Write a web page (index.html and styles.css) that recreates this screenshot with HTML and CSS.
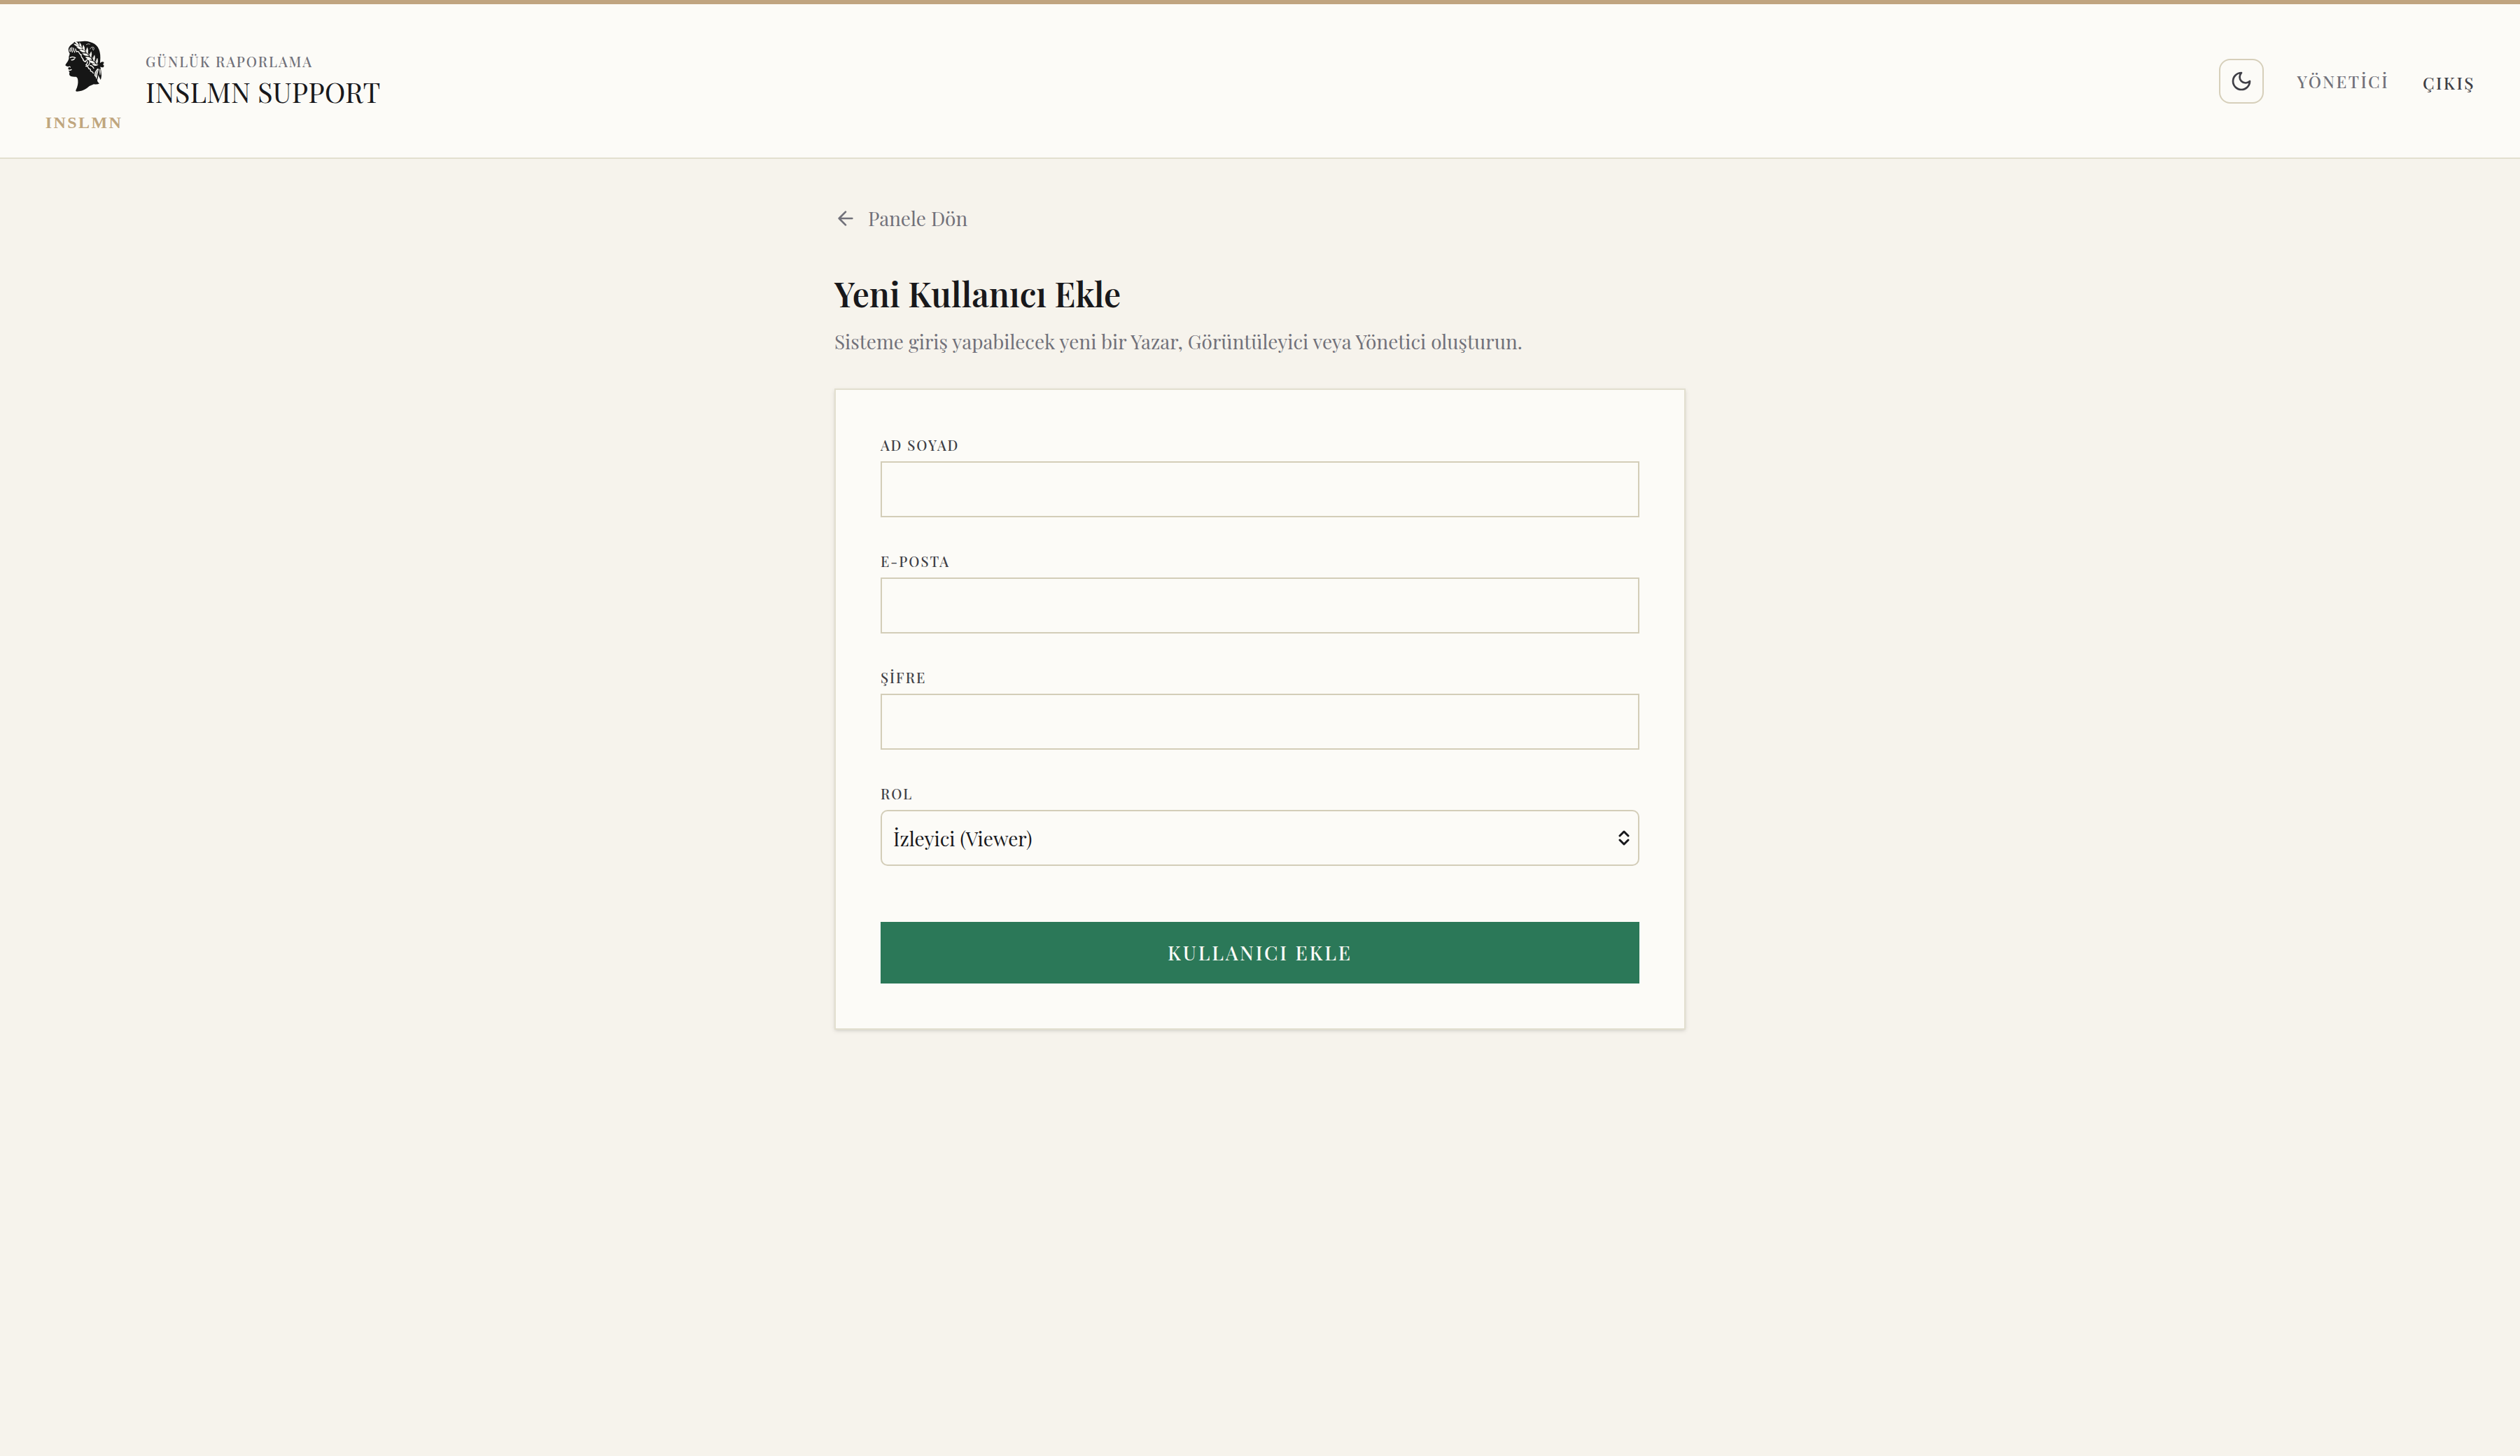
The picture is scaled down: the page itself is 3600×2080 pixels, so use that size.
FILE: index.html
```html
<!DOCTYPE html>
<html lang="tr">
<head>
  <meta charset="UTF-8" />
  <meta name="viewport" content="width=device-width, initial-scale=1" />
  <title>INSLMN Support</title>
  <link rel="stylesheet" href="styles.css">
</head>
<body>
  <header class="header">
    <div class="brand">
      <div class="logo">
        <svg class="logo-head" viewBox="-48 -6 336 336" aria-hidden="true">
          <!-- head and neck -->
          <path fill="#161616" d="M55 102 L53 90 Q56 76 70 68 L80 59 L106 58 Q128 54 146 60 Q168 66 179 82 Q191 102 190 128 L189 150 Q196 142 205 146 Q207 152 201 155 Q208 160 204 167 Q197 171 190 166 Q194 182 195 204 Q194 216 191 222 Q186 212 181 202 Q181 214 177 222 Q176 231 186 238 Q178 243 162 241 Q146 246 132 258 Q112 272 90 272 Q82 272 86 264 Q96 244 94 224 Q93 212 86 209 Q74 210 64 207 Q56 204 57 196 L58 189 L54 184 L59 180 L52 176 L54 166 Q46 165 41 161 Q39 158 43 154 Q53 142 55 132 Q54 122 59 110 Z"/>
          <!-- face, fringe and ear -->
          <g fill="none" stroke="#fcfbf7" stroke-width="4" stroke-linecap="round">
            <path d="M62 86 Q58 95 61 101 M68 84 Q66 95 70 103 M75 86 Q75 97 80 104 M84 90 Q84 99 89 102 Q94 97 98 104 Q102 113 109 115"/>
            <path d="M61 127 Q70 121 83 128 M66 137 Q74 138 79 132"/>
            <path d="M54 167 Q59 163 61 168 M58 181 Q63 180 66 178"/>
            <path d="M106 114 Q108 125 115 132 Q117 142 126 145 M126 145 Q130 133 141 136 Q148 143 143 153 Q137 166 130 158 M128 158 Q137 151 134 144 M128 164 Q138 162 140 174 Q150 175 148 184 Q158 187 160 194 M146 160 Q157 162 162 173"/>
            <path stroke-width="2" d="M130 71 Q138 65 145 69 M146 90 Q151 78 162 83 Q166 90 160 96 M154 83 Q160 86 158 92"/>
          </g>
          <!-- laurel leaves and ribbon -->
          <path fill="none" stroke="#fcfbf7" stroke-width="2" d="M80 59 Q132 94 180 158"/>
          <g fill="#fcfbf7" stroke="#fcfbf7" stroke-width="1">
            <path d="M80 56 Q94 60 98 73 Q85 70 80 56Z"/>
            <path d="M76 68 Q92 68 101 79 Q86 81 76 68Z"/>
            <path d="M101 62 Q110 70 109 83 Q99 77 101 62Z"/>
            <path d="M88 80 Q103 77 114 89 Q99 95 88 80Z"/>
            <path d="M117 73 Q126 85 121 97 Q111 87 117 73Z"/>
            <path d="M101 94 Q116 90 127 103 Q112 108 101 94Z"/>
            <path d="M134 83 Q141 98 134 111 Q125 98 134 83Z"/>
            <path d="M113 110 Q128 105 141 118 Q126 123 113 110Z"/>
            <path d="M151 101 Q156 115 148 127 Q141 113 151 101Z"/>
            <path d="M126 125 Q142 120 154 135 Q138 139 126 125Z"/>
            <path d="M165 116 Q170 131 162 143 Q155 129 165 116Z"/>
            <path d="M142 140 Q156 137 168 151 Q152 155 142 140Z"/>
            <path d="M177 129 Q182 144 175 153 Q168 143 177 129Z"/>
            <path d="M155 155 Q168 151 179 159 Q166 166 155 155Z"/>
            <path d="M178 174 Q164 188 165 204 Q172 209 174 218 Q176 195 183 176Z"/>
            <path d="M187 176 Q186 190 189 202 Q192 190 190 177Z"/>
          </g>
          <path fill="none" stroke="#161616" stroke-width="2" d="M178 181 Q169 192 171 205"/>
        </svg>
        <span class="logo-text">INSLMN</span>
      </div>
      <div>
        <div class="brand-sub">GÜNLÜK RAPORLAMA</div>
        <div class="brand-title">INSLMN SUPPORT</div>
      </div>
    </div>

    <nav class="nav">
      <button type="button" class="theme-btn" aria-label="Koyu tema">
        <svg class="icon" viewBox="0 0 24 24"><path d="M12 3a6 6 0 0 0 9 9 9 9 0 1 1-9-9Z"/></svg>
      </button>
      <span class="nav-role">YÖNETİCİ</span>
      <button type="button" class="logout">ÇIKIŞ</button>
    </nav>
  </header>

  <main class="main">
    <a class="back" href="#">
      <svg class="icon" viewBox="0 0 24 24"><path d="m12 19-7-7 7-7M19 12H5"/></svg>
      Panele Dön
    </a>
    <h1>Yeni Kullanıcı Ekle</h1>
    <p class="intro">Sisteme giriş yapabilecek yeni bir Yazar, Görüntüleyici veya Yönetici oluşturun.</p>

    <form class="card">
      <div class="field">
        <label for="name">AD SOYAD</label>
        <input type="text" id="name" name="name" required />
      </div>
      <div class="field">
        <label for="email">E-POSTA</label>
        <input type="email" id="email" name="email" required />
      </div>
      <div class="field">
        <label for="password">ŞİFRE</label>
        <input type="password" id="password" name="password" required />
      </div>
      <div class="field">
        <label for="role">ROL</label>
        <div class="select">
          <select id="role" name="role">
            <option value="viewer" selected>İzleyici (Viewer)</option>
            <option value="writer">Yazar</option>
            <option value="admin">Yönetici</option>
          </select>
          <svg class="select-arrows" viewBox="0 0 16 24" aria-hidden="true"><path d="M2 9l6-6 6 6M2 15l6 6 6-6"/></svg>
        </div>
      </div>
      <button type="submit" class="submit">KULLANICI EKLE</button>
    </form>
  </main>
</body>
</html>
```
FILE: styles.css
```css
* {
  box-sizing: border-box;
}
body {
  margin: 0;
  min-height: 100vh;
  background: #f6f3ec;
  color: #18181b;
  font-family: "Playfair Display", "Liberation Serif", serif;
}
button, input, select {
  font-family: inherit;
}

/* Header */
.header {
  display: flex;
  justify-content: space-between;
  align-items: center;
  padding: 32px 64px;
  background: #fcfbf7;
  border-top: 6px solid #c0a480;
  border-bottom: 2px solid #e2dfcf;
}
.brand {
  display: flex;
  align-items: center;
  gap: 32px;
}
.logo {
  display: flex;
  flex-direction: column;
  align-items: center;
  gap: 8px;
}
.logo-head {
  width: 112px;
  height: 112px;
}
.logo-text {
  font-family: "Liberation Serif", serif;
  font-size: 24px;
  font-weight: bold;
  line-height: 35px;
  letter-spacing: 0.1em;
  color: #c0a67e;
}
.brand-sub {
  font-size: 20px;
  font-weight: 500;
  line-height: 30px;
  letter-spacing: 0.1em;
  color: #71717a;
}
.brand-title {
  font-size: 40px;
  line-height: 56px;
}
.nav {
  display: flex;
  align-items: center;
  gap: 48px;
  font-size: 24px;
  font-weight: 500;
  letter-spacing: 0.1em;
}
.icon {
  width: 32px;
  height: 32px;
  fill: none;
  stroke: currentColor;
  stroke-width: 2;
  stroke-linecap: round;
  stroke-linejoin: round;
}
.theme-btn {
  display: flex;
  align-items: center;
  justify-content: center;
  width: 64px;
  height: 64px;
  padding: 0;
  background: none;
  border: 2px solid #d6cfba;
  border-radius: 16px;
  color: #3f3f46;
  cursor: pointer;
}
.nav-role {
  color: #71717a;
}
.logout {
  padding: 4px 0 0;
  border: none;
  background: none;
  font-size: 24px;
  font-weight: 500;
  letter-spacing: 0.1em;
  color: #3f3f46;
  cursor: pointer;
}

/* Page */
.main {
  max-width: 1344px;
  margin: 0 auto;
  padding: 64px;
}
.back {
  display: inline-flex;
  align-items: center;
  gap: 16px;
  font-size: 28px;
  line-height: 42px;
  color: #71717a;
  text-decoration: none;
  vertical-align: top;
}
h1 {
  margin: 48px 0 10px;
  font-size: 48px;
  font-weight: 600;
  line-height: 76px;
}
.intro {
  margin: 0 0 46px;
  font-size: 28px;
  line-height: 42px;
  color: #71717a;
}

/* Form */
.card {
  display: flex;
  flex-direction: column;
  gap: 48px;
  padding: 64px;
  background: #fcfbf7;
  border: 2px solid #e2dfcf;
  box-shadow: 0 2px 6px rgba(0, 0, 0, 0.1), 0 2px 4px -2px rgba(0, 0, 0, 0.1);
}
.field {
  display: flex;
  flex-direction: column;
  gap: 8px;
}
label {
  font-size: 20px;
  font-weight: 500;
  line-height: 30px;
  letter-spacing: 0.1em;
  color: #3f3f46;
}
input, select {
  width: 100%;
  height: 80px;
  padding: 0 16px;
  background: #fcfbf7;
  border: 2px solid #d3cdb8;
  border-radius: 0;
  color: #18181b;
  font-size: 28px;
}
.select {
  display: grid;
  align-items: center;
}
.select select, .select-arrows {
  grid-area: 1 / 1;
}
.select select {
  appearance: none;
  border-radius: 10px;
}
.select-arrows {
  justify-self: end;
  width: 16px;
  height: 24px;
  margin-right: 14px;
  fill: none;
  stroke: #18181b;
  stroke-width: 3;
  stroke-linecap: round;
  stroke-linejoin: round;
  pointer-events: none;
}
.submit {
  margin-top: 32px;
  padding: 24px 0;
  border: none;
  background: #2b7858;
  color: #fcfbf7;
  font-size: 28px;
  font-weight: 500;
  line-height: 40px;
  letter-spacing: 0.1em;
  cursor: pointer;
}
```
